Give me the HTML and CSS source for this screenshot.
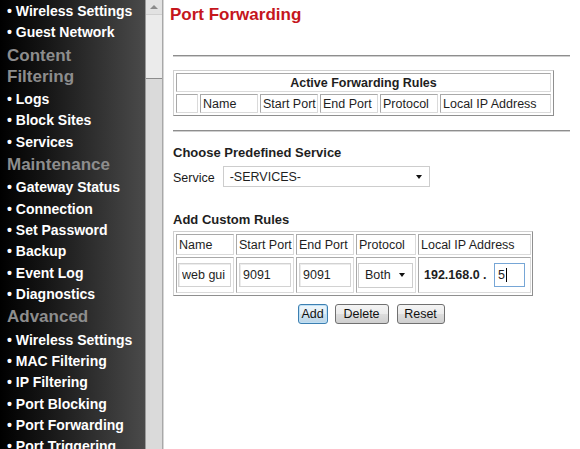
FILE: index.html
```html
<!DOCTYPE html>
<html>
<head>
<meta charset="utf-8">
<link rel="stylesheet" href="styles.css">
</head>
<body>
<nav class="sidebar">
  <ul class="menu">
    <li>• Wireless Settings</li>
    <li>• Guest Network</li>
  </ul>
  <div class="menu-head">Content<br>Filtering</div>
  <ul class="menu">
    <li>• Logs</li>
    <li>• Block Sites</li>
    <li>• Services</li>
  </ul>
  <div class="menu-head">Maintenance</div>
  <ul class="menu">
    <li>• Gateway Status</li>
    <li>• Connection</li>
    <li>• Set Password</li>
    <li>• Backup</li>
    <li>• Event Log</li>
    <li>• Diagnostics</li>
  </ul>
  <div class="menu-head">Advanced</div>
  <ul class="menu">
    <li>• Wireless Settings</li>
    <li>• MAC Filtering</li>
    <li>• IP Filtering</li>
    <li>• Port Blocking</li>
    <li>• Port Forwarding</li>
    <li>• Port Triggering</li>
  </ul>
</nav>
<div class="scrollbar">
  <div class="sb-btn"><span class="sb-arrow"></span></div>
  <div class="sb-track"></div>
  <div class="sb-thumb"></div>
</div>
<main class="content">
  <h1 class="title">Port Forwarding</h1>
  <div class="rule rule-1"></div>

  <div class="grid active-table">
    <div class="cell head span-all">Active Forwarding Rules</div>
    <div class="cell"></div>
    <div class="cell">Name</div>
    <div class="cell">Start Port</div>
    <div class="cell">End Port</div>
    <div class="cell">Protocol</div>
    <div class="cell">Local IP Address</div>
  </div>

  <div class="rule rule-2"></div>

  <h2 class="section section-1">Choose Predefined Service</h2>
  <div class="service-row">
    <span class="label">Service</span>
    <div class="select service-select"><span>-SERVICES-</span><span class="caret-down"></span></div>
  </div>

  <h2 class="section section-2">Add Custom Rules</h2>
  <div class="grid custom-table">
    <div class="cell">Name</div>
    <div class="cell">Start Port</div>
    <div class="cell">End Port</div>
    <div class="cell">Protocol</div>
    <div class="cell">Local IP Address</div>
    <div class="cell field-cell"><input class="field f-name" type="text" value="web gui"></div>
    <div class="cell field-cell"><input class="field f-port" type="text" value="9091"></div>
    <div class="cell field-cell"><input class="field f-port" type="text" value="9091"></div>
    <div class="cell field-cell"><div class="select proto-select"><span>Both</span><span class="caret-down"></span></div></div>
    <div class="cell field-cell ip-cell"><span class="ip-prefix">192.168.0 .</span><span class="field f-ip focused">5<span class="text-caret"></span></span></div>
  </div>

  <div class="buttons">
    <button class="btn btn-add">Add</button>
    <button class="btn btn-delete">Delete</button>
    <button class="btn btn-reset">Reset</button>
  </div>
</main>
</body>
</html>
```

FILE: styles.css
```css
* { box-sizing: border-box; }

html, body {
  margin: 0;
  padding: 0;
  height: 449px;
  overflow: hidden;
  background: #fff;
}

body {
  display: flex;
  font-family: "Liberation Sans", Arial, sans-serif;
}

/* ---------- sidebar ---------- */
.sidebar {
  width: 145px;
  flex: none;
  height: 449px;
  background: linear-gradient(to right, #000 0%, #141414 30%, #333 70%, #4a4a4a 100%);
  padding: 1px 0 0 7px;
  margin: 0;
}

.menu {
  list-style: none;
  margin: 0;
  padding: 0;
}

.menu li {
  color: #fff;
  font-weight: bold;
  font-size: 14px;
  line-height: 21.3px;
  white-space: nowrap;
}

.menu-head {
  color: #8d8d8d;
  font-weight: bold;
  font-size: 17px;
  line-height: 21px;
  padding-top: 1px;
  padding-bottom: 2.5px;
}

/* ---------- fake scrollbar ---------- */
.scrollbar {
  width: 18px;
  flex: none;
  display: flex;
  flex-direction: column;
  border-left: 1px solid #9a9a9a;
  border-right: 1px solid #a8a8a8;
  background: #e6e6e6;
}

.sb-btn {
  height: 15px;
  display: flex;
  align-items: center;
  justify-content: center;
  background: #e2e2e2;
  border-bottom: 1px solid #d0d0d0;
}

.sb-arrow {
  width: 0;
  height: 0;
  border-left: 4px solid transparent;
  border-right: 4px solid transparent;
  border-bottom: 4px solid #8a8a8a;
}

.sb-track {
  height: 63px;
  background: #ebebeb;
}

.sb-thumb {
  flex: 1;
  background: #dadada;
  border-top: 1px solid #8c8c8c;
}

/* ---------- content ---------- */
.content {
  flex: 1;
  padding: 5px 10px 0 9px;
  color: #1a1a1a;
  border-left: 1px solid #d6d6d6;
}

.title {
  margin: 0 0 0 -3px;
  font-size: 17px;
  line-height: 20px;
  font-weight: bold;
  color: #c5161d;
}

.rule {
  height: 2px;
  border-top: 1px solid #8e8e8e;
  border-bottom: 1px solid #cfcfcf;
}

.rule-1 { margin-top: 30px; }
.rule-2 { margin-top: 14px; }

.grid {
  display: grid;
  gap: 2px;
  padding: 2px;
  border: 1px solid;
  border-color: #d0d0d0 #8f8f8f #8f8f8f #d0d0d0;
  font-size: 12.5px;
  color: #1e1e1e;
}

.cell {
  border: 1px solid;
  border-color: #a9a9a9 #dadada #dadada #a9a9a9;
  padding: 0 2px;
  white-space: nowrap;
  overflow: hidden;
  display: flex;
  align-items: center;
}

.active-table {
  width: 381px;
  margin-top: 13px;
  grid-template-columns: 22px 58px 58px 58px 58px 111px;
  grid-template-rows: 19px 19px;
}

.head {
  justify-content: center;
  font-weight: bold;
}

.span-all { grid-column: 1 / -1; }

.section {
  margin: 0;
  font-size: 13px;
  line-height: 16px;
  font-weight: bold;
  color: #1e1e1e;
}

.section-1 { margin-top: 13px; }
.section-2 { margin-top: 25px; }

.service-row {
  display: flex;
  align-items: center;
  gap: 8px;
  margin-top: 5px;
  font-size: 12.5px;
}

.label { padding-top: 3px; }

.select {
  display: flex;
  align-items: center;
  justify-content: space-between;
  background: #fff;
  border: 1px solid #cdcdcd;
  font-size: 12.5px;
  color: #1e1e1e;
}

.service-select {
  width: 207px;
  height: 21px;
  padding: 0 7px 0 6px;
}

.caret-down {
  width: 0;
  height: 0;
  border-left: 3.5px solid transparent;
  border-right: 3.5px solid transparent;
  border-top: 4px solid #111;
}

.custom-table {
  width: 360px;
  margin-top: 3px;
  grid-template-columns: 58px 58px 58px 60px 113px;
  grid-template-rows: 21px 36px;
}

.field-cell { padding: 0 1px; }

.field {
  height: 24px;
  border: 1px solid #d2d2d2;
  box-shadow: inset 1px 1px 0 #ececec;
  background: #fff;
  font-family: "Liberation Sans", Arial, sans-serif;
  font-size: 12.5px;
  color: #1e1e1e;
  padding: 0 3px;
  margin: 0;
  outline: none;
}

.f-name { width: 53px; }
.f-port { width: 52px; margin-left: 1px; }

.proto-select {
  width: 55px;
  height: 25px;
  padding: 0 7px 0 6px;
}

.ip-cell { padding-left: 5px; }

.ip-prefix {
  font-weight: bold;
  width: 70px;
}

.f-ip {
  display: flex;
  align-items: center;
  width: 31px;
  border-color: #76a6d6;
  box-shadow: none;
}

.text-caret {
  display: inline-block;
  width: 1px;
  height: 14px;
  background: #000;
  margin-left: 1px;
}

.buttons {
  display: flex;
  justify-content: center;
  gap: 7px;
  margin-top: 8px;
  padding-right: 1px;
}

.btn {
  height: 20px;
  padding: 0;
  font-family: "Liberation Sans", Arial, sans-serif;
  font-size: 12.5px;
  color: #111;
  border: 1px solid #707070;
  border-radius: 3px;
  background: linear-gradient(to bottom, #f4f4f4 0%, #ebebeb 50%, #dddddd 51%, #cfcfcf 100%);
}

.btn-add {
  width: 30px;
  border-color: #3c7fb1;
  box-shadow: inset 0 0 0 1px #bfe0f5;
  background: linear-gradient(to bottom, #eef6fb 0%, #e2eef6 50%, #cfe3f0 51%, #bcd6e8 100%);
}

.btn-delete { width: 54px; margin-right: 1px; }
.btn-reset { width: 48px; }
```
